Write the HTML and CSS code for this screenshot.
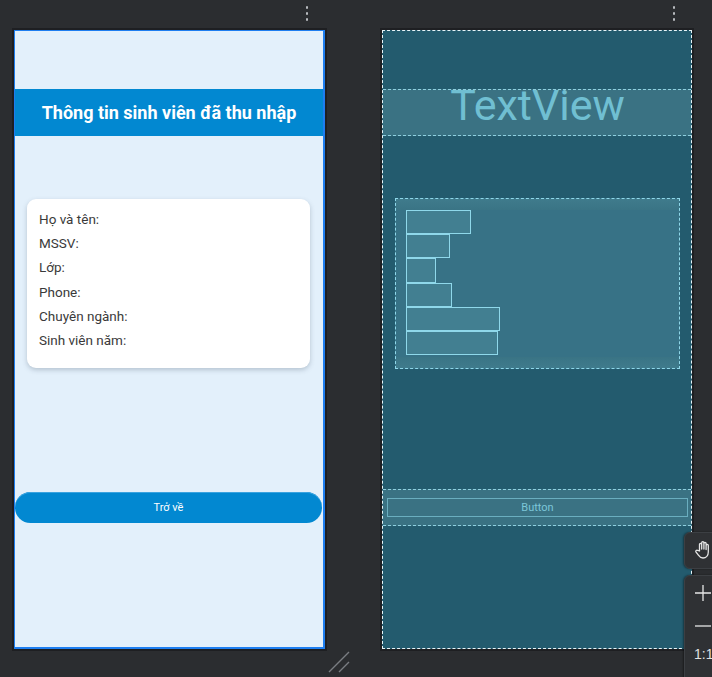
FILE: index.html
```
<!DOCTYPE html>
<html lang="vi">
<head>
<meta charset="utf-8">
<link rel="stylesheet" href="styles.css">
</head>
<body>
<div class="canvas">
  <div class="dots dots-left"><i></i><i></i><i></i></div>
  <div class="dots dots-right"><i></i><i></i><i></i></div>

  <div class="phone design">
    <div class="spacer-top"></div>
    <div class="header">Thông tin sinh viên đã thu nhập</div>
    <div class="card">
      <div class="row">Họ và tên:</div>
      <div class="row">MSSV:</div>
      <div class="row">Lớp:</div>
      <div class="row">Phone:</div>
      <div class="row">Chuyên ngành:</div>
      <div class="row">Sinh viên năm:</div>
    </div>
    <button class="back">Trở về</button>
  </div>

  <div class="phone blueprint">
    <div class="spacer-top"></div>
    <div class="bp-header">TextView</div>
    <div class="bp-card">
      <div class="bp-band top"></div>
      <div class="bp-bars">
        <div class="bar" style="width:65px"></div>
        <div class="bar" style="width:44px"></div>
        <div class="bar" style="width:30px"></div>
        <div class="bar" style="width:46px"></div>
        <div class="bar" style="width:94px"></div>
        <div class="bar" style="width:92px"></div>
      </div>
      <div class="bp-band bottom"></div>
    </div>
    <div class="bp-btnrow"><div class="bp-btn">Button</div></div>
  </div>

  <div class="grip">
    <svg width="22" height="22" viewBox="0 0 22 22"><path d="M1 21 L21 1 M11 21 L21 11" stroke="#7a7d82" stroke-width="1.4" fill="none"/></svg>
  </div>

  <div class="tool tool-hand">
    <svg width="20" height="20" viewBox="0 0 20 20" fill="none" stroke="#e6e6e6" stroke-width="1.3" stroke-linejoin="round" stroke-linecap="round">
      <path d="M6.5 11 V4.5 a1.1 1.1 0 0 1 2.2 0 V9 V2.8 a1.1 1.1 0 0 1 2.2 0 V9 V3.6 a1.1 1.1 0 0 1 2.2 0 V9.5 V5.5 a1.1 1.1 0 0 1 2.2 0 V12 c0 3.5 -2.2 6 -5.3 6 c-2.3 0 -3.4 -1 -4.6 -2.8 L2.9 11.9 a1.2 1.2 0 0 1 1.8 -1.5 Z"/>
    </svg>
  </div>
  <div class="tool tool-zoom">
    <svg width="20" height="20" viewBox="0 0 20 20"><path d="M10 2 V18 M2 10 H18" stroke="#e6e6e6" stroke-width="1.3"/></svg>
    <svg width="20" height="20" viewBox="0 0 20 20"><path d="M2 10 H18" stroke="#e6e6e6" stroke-width="1.3"/></svg>
    <span class="one">1:1</span>
  </div>
</div>
</body>
</html>
```
FILE: styles.css
```
* { box-sizing: border-box; }
html, body { margin: 0; padding: 0; }
body {
  width: 712px;
  height: 677px;
  overflow: hidden;
  background: #2b2d30;
  font-family: Roboto, "Noto Sans", "Liberation Sans", sans-serif;
}
.canvas { position: relative; width: 712px; height: 677px; }

.dots { position: absolute; top: 6px; display: flex; flex-direction: column; gap: 3px; }
.dots i { display: block; width: 2px; height: 3px; background: #b8bbbf; border-radius: 1px; }
.dots-left { left: 306px; }
.dots-right { left: 673px; }

.phone {
  position: absolute;
  top: 30px;
  width: 311px;
  height: 619px;
  display: flex;
  flex-direction: column;
  box-shadow: 0 0 0 2px #1e1f22;
}
.spacer-top { height: 58px; flex: none; }

/* design view */
.design {
  left: 14px;
  background: #e3f0fb;
  border: 1px solid #1e7ef0;
  border-right-width: 2px;
  border-bottom-width: 2px;
}
.header {
  height: 47px;
  background: #0288d1;
  color: #fff;
  font-weight: 700;
  font-size: 18px;
  display: flex;
  align-items: center;
  justify-content: center;
  padding-bottom: 1px;
}
.card {
  margin: 63px 13px 0 12px;
  height: 169px;
  background: #fff;
  border-radius: 9px;
  box-shadow: 0 2px 5px rgba(60, 80, 100, 0.28);
  padding: 8px 12px;
  display: flex;
  flex-direction: column;
}
.row {
  height: 24.2px;
  line-height: 24px;
  font-size: 13.5px;
  color: #3a3a3a;
}
.back {
  margin: 124px 1px 0 0;
  height: 31px;
  border: none;
  border-radius: 16px;
  background: #0288d1;
  color: #fff;
  font-family: Roboto, "Noto Sans", sans-serif;
  font-size: 11px;
  padding: 0;
  box-shadow: inset 0 1px 0 #3aa3e0;
}

/* blueprint view */
.blueprint {
  left: 382px;
  width: 310px;
  background: #235b6e;
  border: 1px dashed #e8f4f8;
}
.bp-header {
  height: 47px;
  background: #3a7283;
  border-top: 1px dashed #8fd0e0;
  border-bottom: 1px dashed #8fd0e0;
  color: #70bfd2;
  font-size: 43px;
  line-height: 30px;
  text-align: center;
  padding-left: 1px;
  padding-top: 0;
  display: flex;
  justify-content: center;
  align-items: flex-start;
}
.bp-card {
  margin: 62px 11px 0 12px;
  height: 171px;
  background: #377286;
  border: 1px dashed #8fd8ea;
  display: flex;
  flex-direction: column;
}
.bp-band { height: 11px; flex: none; }
.bp-band.top { background: linear-gradient(#3f7b8c, #3a7485); }
.bp-band.bottom { margin-top: auto; background: linear-gradient(#3a7485, #3f7b8c); height: 11px; }
.bp-bars { padding-left: 10px; display: flex; flex-direction: column; }
.bar {
  height: 24.2px;
  background: #427f91;
  border: 1px solid #8fd8ea;
}
.bp-btnrow {
  margin-top: 120px;
  height: 37px;
  background: #3a7283;
  border-top: 1px dashed #8fd0e0;
  border-bottom: 1px dashed #8fd0e0;
  padding: 8px 3px 0 4px;
}
.bp-btn {
  height: 19px;
  border: 1px solid #6aaebf;
  color: #7cc6d8;
  font-size: 11px;
  line-height: 17px;
  text-align: center;
}

.grip { position: absolute; left: 328px; top: 651px; width: 22px; height: 22px; }

.tool {
  position: absolute;
  left: 684px;
  width: 40px;
  background: #2f3134;
  border: 1px solid #3c3f43;
  border-radius: 6px 0 0 6px;
  box-shadow: -1px 0 2px rgba(0,0,0,0.4);
}
.tool-hand { top: 532px; height: 37px; padding: 7px 0 0 8px; }
.tool-zoom {
  top: 575px;
  height: 110px;
  display: flex;
  flex-direction: column;
  align-items: flex-start;
  padding: 7px 0 0 8px;
  gap: 13px;
}
.one { color: #e0e0e0; font-size: 14px; font-family: "Liberation Sans", sans-serif; margin-left: 1px; margin-top: -3px; }
```
